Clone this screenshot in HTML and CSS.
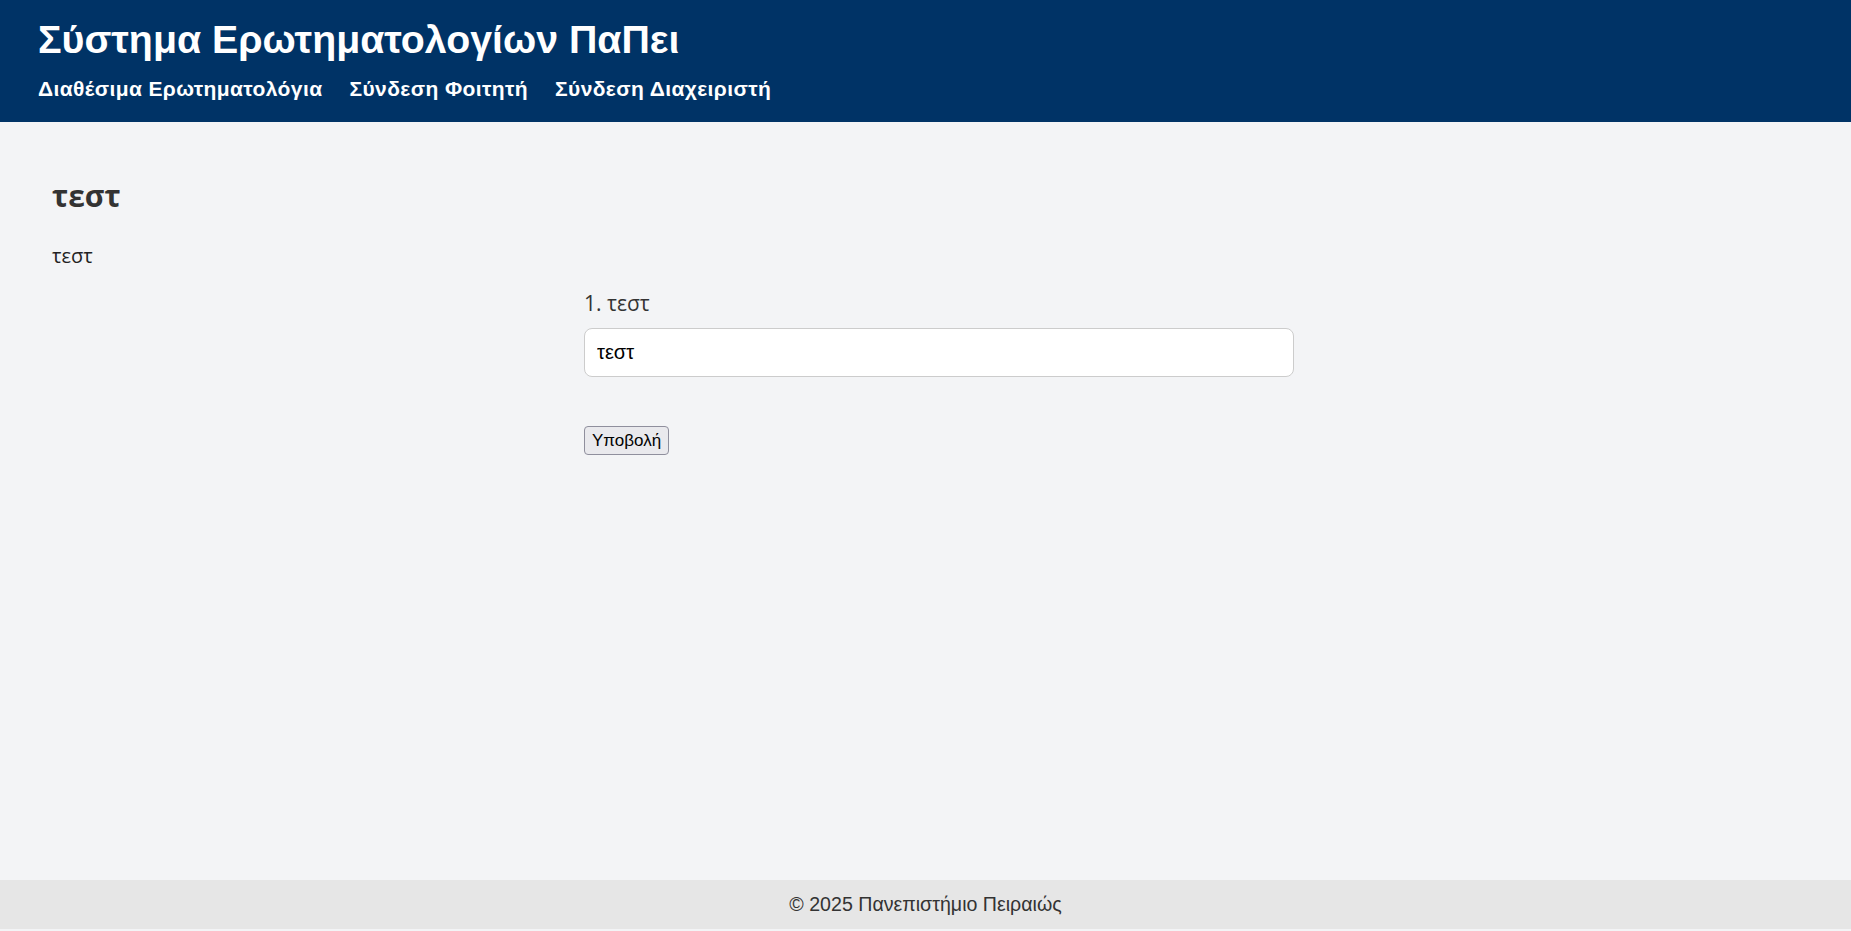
FILE: index.html
```html
<!DOCTYPE html>
<html lang="el">
<head>
<meta charset="utf-8">
<title>Σύστημα Ερωτηματολογίων ΠαΠει</title>
<link rel="stylesheet" href="styles.css">
</head>
<body>
<header class="site-header">
  <h1 class="site-title">Σύστημα Ερωτηματολογίων ΠαΠει</h1>
  <nav class="site-nav">
    <a href="#">Διαθέσιμα Ερωτηματολόγια</a>
    <a href="#">Σύνδεση Φοιτητή</a>
    <a href="#">Σύνδεση Διαχειριστή</a>
  </nav>
</header>
<main class="content">
  <h2 class="survey-title">τεστ</h2>
  <p class="survey-desc">τεστ</p>
  <form class="survey-form">
    <div class="question">
      <label class="question-label" for="q1">1. τεστ</label>
      <input class="question-input" id="q1" type="text" value="τεστ">
    </div>
    <button class="submit-btn" type="submit">Υποβολή</button>
  </form>
</main>
<footer class="site-footer">© 2025 Πανεπιστήμιο Πειραιώς</footer>
</body>
</html>
```

FILE: styles.css
```css
* { box-sizing: border-box; }

html, body { margin: 0; padding: 0; }

body {
  background: #f3f4f6;
  font-family: "Open Sans", "Noto Sans", sans-serif;
  color: #333;
  min-height: 100vh;
  display: flex;
  flex-direction: column;
}

.site-header {
  background: #003366;
  color: #fff;
  padding: 16px 38px 21px;
  display: flex;
  flex-direction: column;
  gap: 14px;
}

.site-title {
  margin: 0;
  font-family: "Liberation Sans", Arial, sans-serif;
  font-weight: 700;
  font-size: 39.3px;
  line-height: 47px;
}

.site-nav {
  display: flex;
  gap: 27px;
}

.site-nav a {
  color: #fff;
  text-decoration: none;
  font-family: "Liberation Sans", Arial, sans-serif;
  font-weight: 700;
  font-size: 21px;
  letter-spacing: 0.4px;
  line-height: 24px;
}

.content {
  flex: 1;
  padding: 56px 52px 0;
}

.survey-title {
  margin: 0;
  font-size: 30px;
  line-height: 36px;
  font-weight: 700;
  color: #333;
}

.survey-desc {
  margin: 27px 0 0;
  font-size: 20px;
  line-height: 30px;
  color: #222;
}

.survey-form {
  width: 737px;
  margin: 17px auto 0;
  padding-left: 27px;
  display: flex;
  flex-direction: column;
  align-items: flex-start;
}

.question {
  width: 100%;
  display: flex;
  flex-direction: column;
  gap: 10px;
}

.question-label {
  font-size: 21px;
  line-height: 30px;
  color: #333;
}

.question-input {
  width: 100%;
  height: 49px;
  padding: 0 12px;
  border: 1px solid #ccc;
  border-radius: 8px;
  background: #fff;
  font-family: "Liberation Sans", Arial, sans-serif;
  font-size: 20px;
  color: #000;
  outline: none;
}

.submit-btn {
  margin-top: 49px;
  height: 29px;
  padding: 0 7px;
  background: #e9e9ed;
  border: 1px solid #8f8f9d;
  border-radius: 4px;
  font-family: "Liberation Sans", Arial, sans-serif;
  font-size: 17px;
  color: #000;
}

.site-footer {
  background: #e6e6e6;
  height: 49px;
  margin-bottom: 2px;
  display: flex;
  align-items: center;
  justify-content: center;
  font-family: "Liberation Sans", Arial, sans-serif;
  font-size: 19.6px;
  color: #333;
}
```
